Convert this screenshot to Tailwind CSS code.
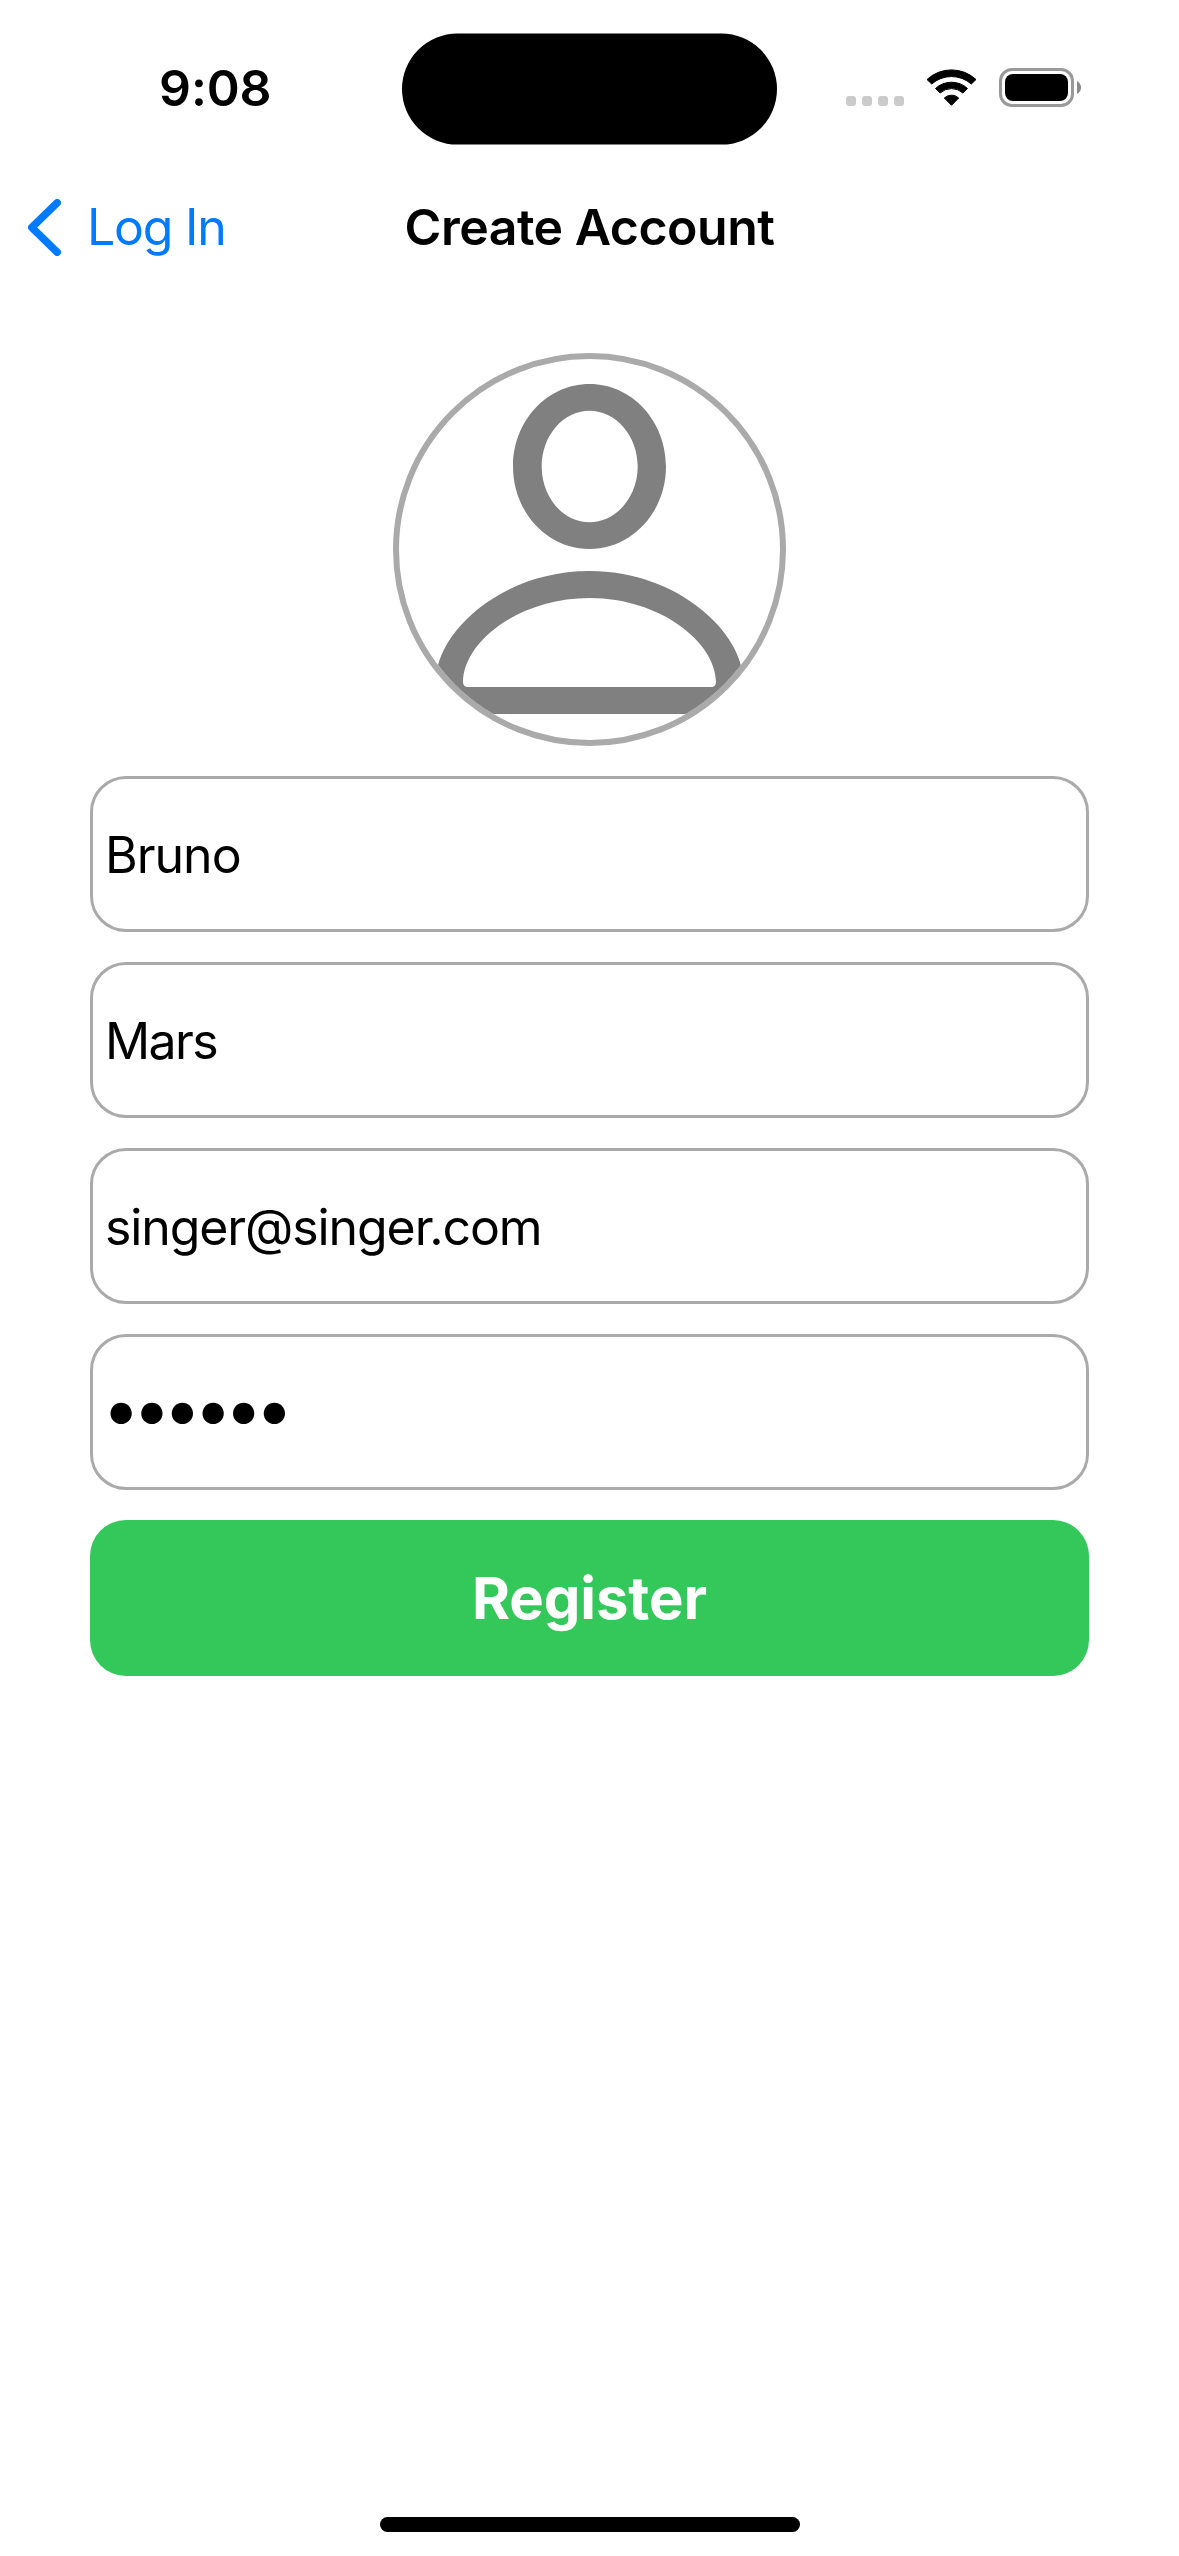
<!DOCTYPE html>
<html lang="en">
<head>
    <meta charset="UTF-8" />
    <meta name="viewport" content="width=device-width, initial-scale=1.0" />
    <script src="https://cdn.jsdelivr.net/npm/@tailwindcss/browser@4"></script>
    <title>Create Account</title>
</head>

<body class="bg-white text-black font-['Inter',sans-serif]">
    <div class="flex flex-col w-[1179px] h-[2556px] overflow-hidden">

        <!-- Status bar -->
        <header class="grid grid-cols-[402px_375px_402px] h-[177px] pt-[33px]">
            <div class="flex items-center h-[111px] pl-[159px] pb-[1px]">
                <span class="text-[50px] leading-none font-semibold tracking-[-0.1px]">9:08</span>
            </div>
            <div class="h-[111px] rounded-full bg-black translate-y-[0.6px]"></div>
            <div class="flex items-start h-[111px] pl-[69px] pt-[35px]">
                <div class="flex gap-[6px] pt-[28px]">
                    <span class="size-[10px] rounded-[3px] bg-[#cbcbcb]"></span>
                    <span class="size-[10px] rounded-[3px] bg-[#cbcbcb]"></span>
                    <span class="size-[10px] rounded-[3px] bg-[#cbcbcb]"></span>
                    <span class="size-[10px] rounded-[3px] bg-[#cbcbcb]"></span>
                </div>
                <svg class="ml-[22px] w-[51px] h-[38px]" viewBox="0 0 51 38" fill="black" stroke="black" stroke-width="1" stroke-linejoin="round">
                    <path d="M1 11.500A36 36 0 0 1 50 11.500L45.300 16A30 30 0 0 0 5.700 16Z" />
                    <path d="M9.500 20.500A23.500 23.500 0 0 1 41.500 20.500L36.900 25A17 17 0 0 0 14.100 25Z" />
                    <path d="M18.300 30A10.500 10.500 0 0 1 32.700 30L25.500 37.300Z" />
                </svg>
                <svg class="ml-[22px] w-[83px] h-[39px]" viewBox="0 0 83 39">
                    <rect x="1.5" y="1.5" width="72" height="36" rx="11.5" fill="none" stroke="#999" stroke-width="3" />
                    <rect x="6" y="6" width="63" height="27" rx="8" />
                    <path d="M78 13Q82 15.500 82 19.500T78 26Z" fill="#8a8a8a" />
                </svg>
            </div>
        </header>

        <!-- Navigation bar -->
        <nav class="grid grid-cols-[360px_1fr_360px] items-center h-[100px] text-[50px] leading-none whitespace-nowrap">
            <a class="flex items-center text-[#007aff]">
                <svg class="ml-[28px] w-[33px] h-[57px]" viewBox="0 0 33 57" fill="none" stroke="#007aff" stroke-width="7.500" stroke-linecap="round" stroke-linejoin="round">
                    <path d="M29.200 3.800L3.800 28.500L29.200 53.200" />
                </svg>
                <span class="ml-[26px] tracking-[-1.25px]">Log In</span>
            </a>
            <h1 class="text-center font-semibold tracking-[-0.5px]">Create Account</h1>
        </nav>

        <main class="flex flex-col gap-[30px] px-[90px] pt-[76px]">
            <div class="self-center size-[393px] rounded-full border-[6px] border-[#aaa] overflow-hidden">
                <svg class="size-[381px]" viewBox="6 6 381 381" fill="#808080" fill-rule="evenodd">
                    <path d="M196.500 31C239 31 273 68 273 113.500S239 196 196.500 196S120 159 120 113.500S154 31 196.500 31ZM196.500 57.700C170 57.700 148.700 83 148.700 113.500S170 169.300 196.500 169.300S244.700 144 244.700 113.500S223 57.700 196.500 57.700Z" />
                    <path d="M43 327C43 280 108 218 196.500 218S350 280 350 327V361H43ZM70 329C70 290 125 245 196.500 245S323 290 323 329Q323 334 318 334H75Q70 334 70 329Z" />
                </svg>
            </div>

            <input type="text" value="Bruno" class="h-[156px] rounded-[36px] border-[3px] border-[#aaa] px-[12px] pt-[2px] text-[50px] tracking-[-1px]" />
            <input type="text" value="Mars" class="h-[156px] rounded-[36px] border-[3px] border-[#aaa] px-[12px] pt-[2px] text-[50px] tracking-[-1.6px]" />
            <input type="text" value="singer@singer.com" class="h-[156px] rounded-[36px] border-[3px] border-[#aaa] px-[12px] pt-[2px] text-[50px] tracking-[-1.1px]" />
            <input type="password" value="singer" class="h-[156px] rounded-[36px] border-[3px] border-[#aaa] pl-[9px] pb-[8px] text-[68px] tracking-[-7.6px]" />
            <button class="h-[156px] rounded-[36px] bg-[#34c759] text-white text-[58px] font-bold tracking-[-0.1px]">Register</button>
        </main>

        <!-- Home indicator -->
        <footer class="mt-auto mx-auto mb-[24px] w-[420px] h-[15px] rounded-full bg-black"></footer>
    </div>
</body>
</html>
